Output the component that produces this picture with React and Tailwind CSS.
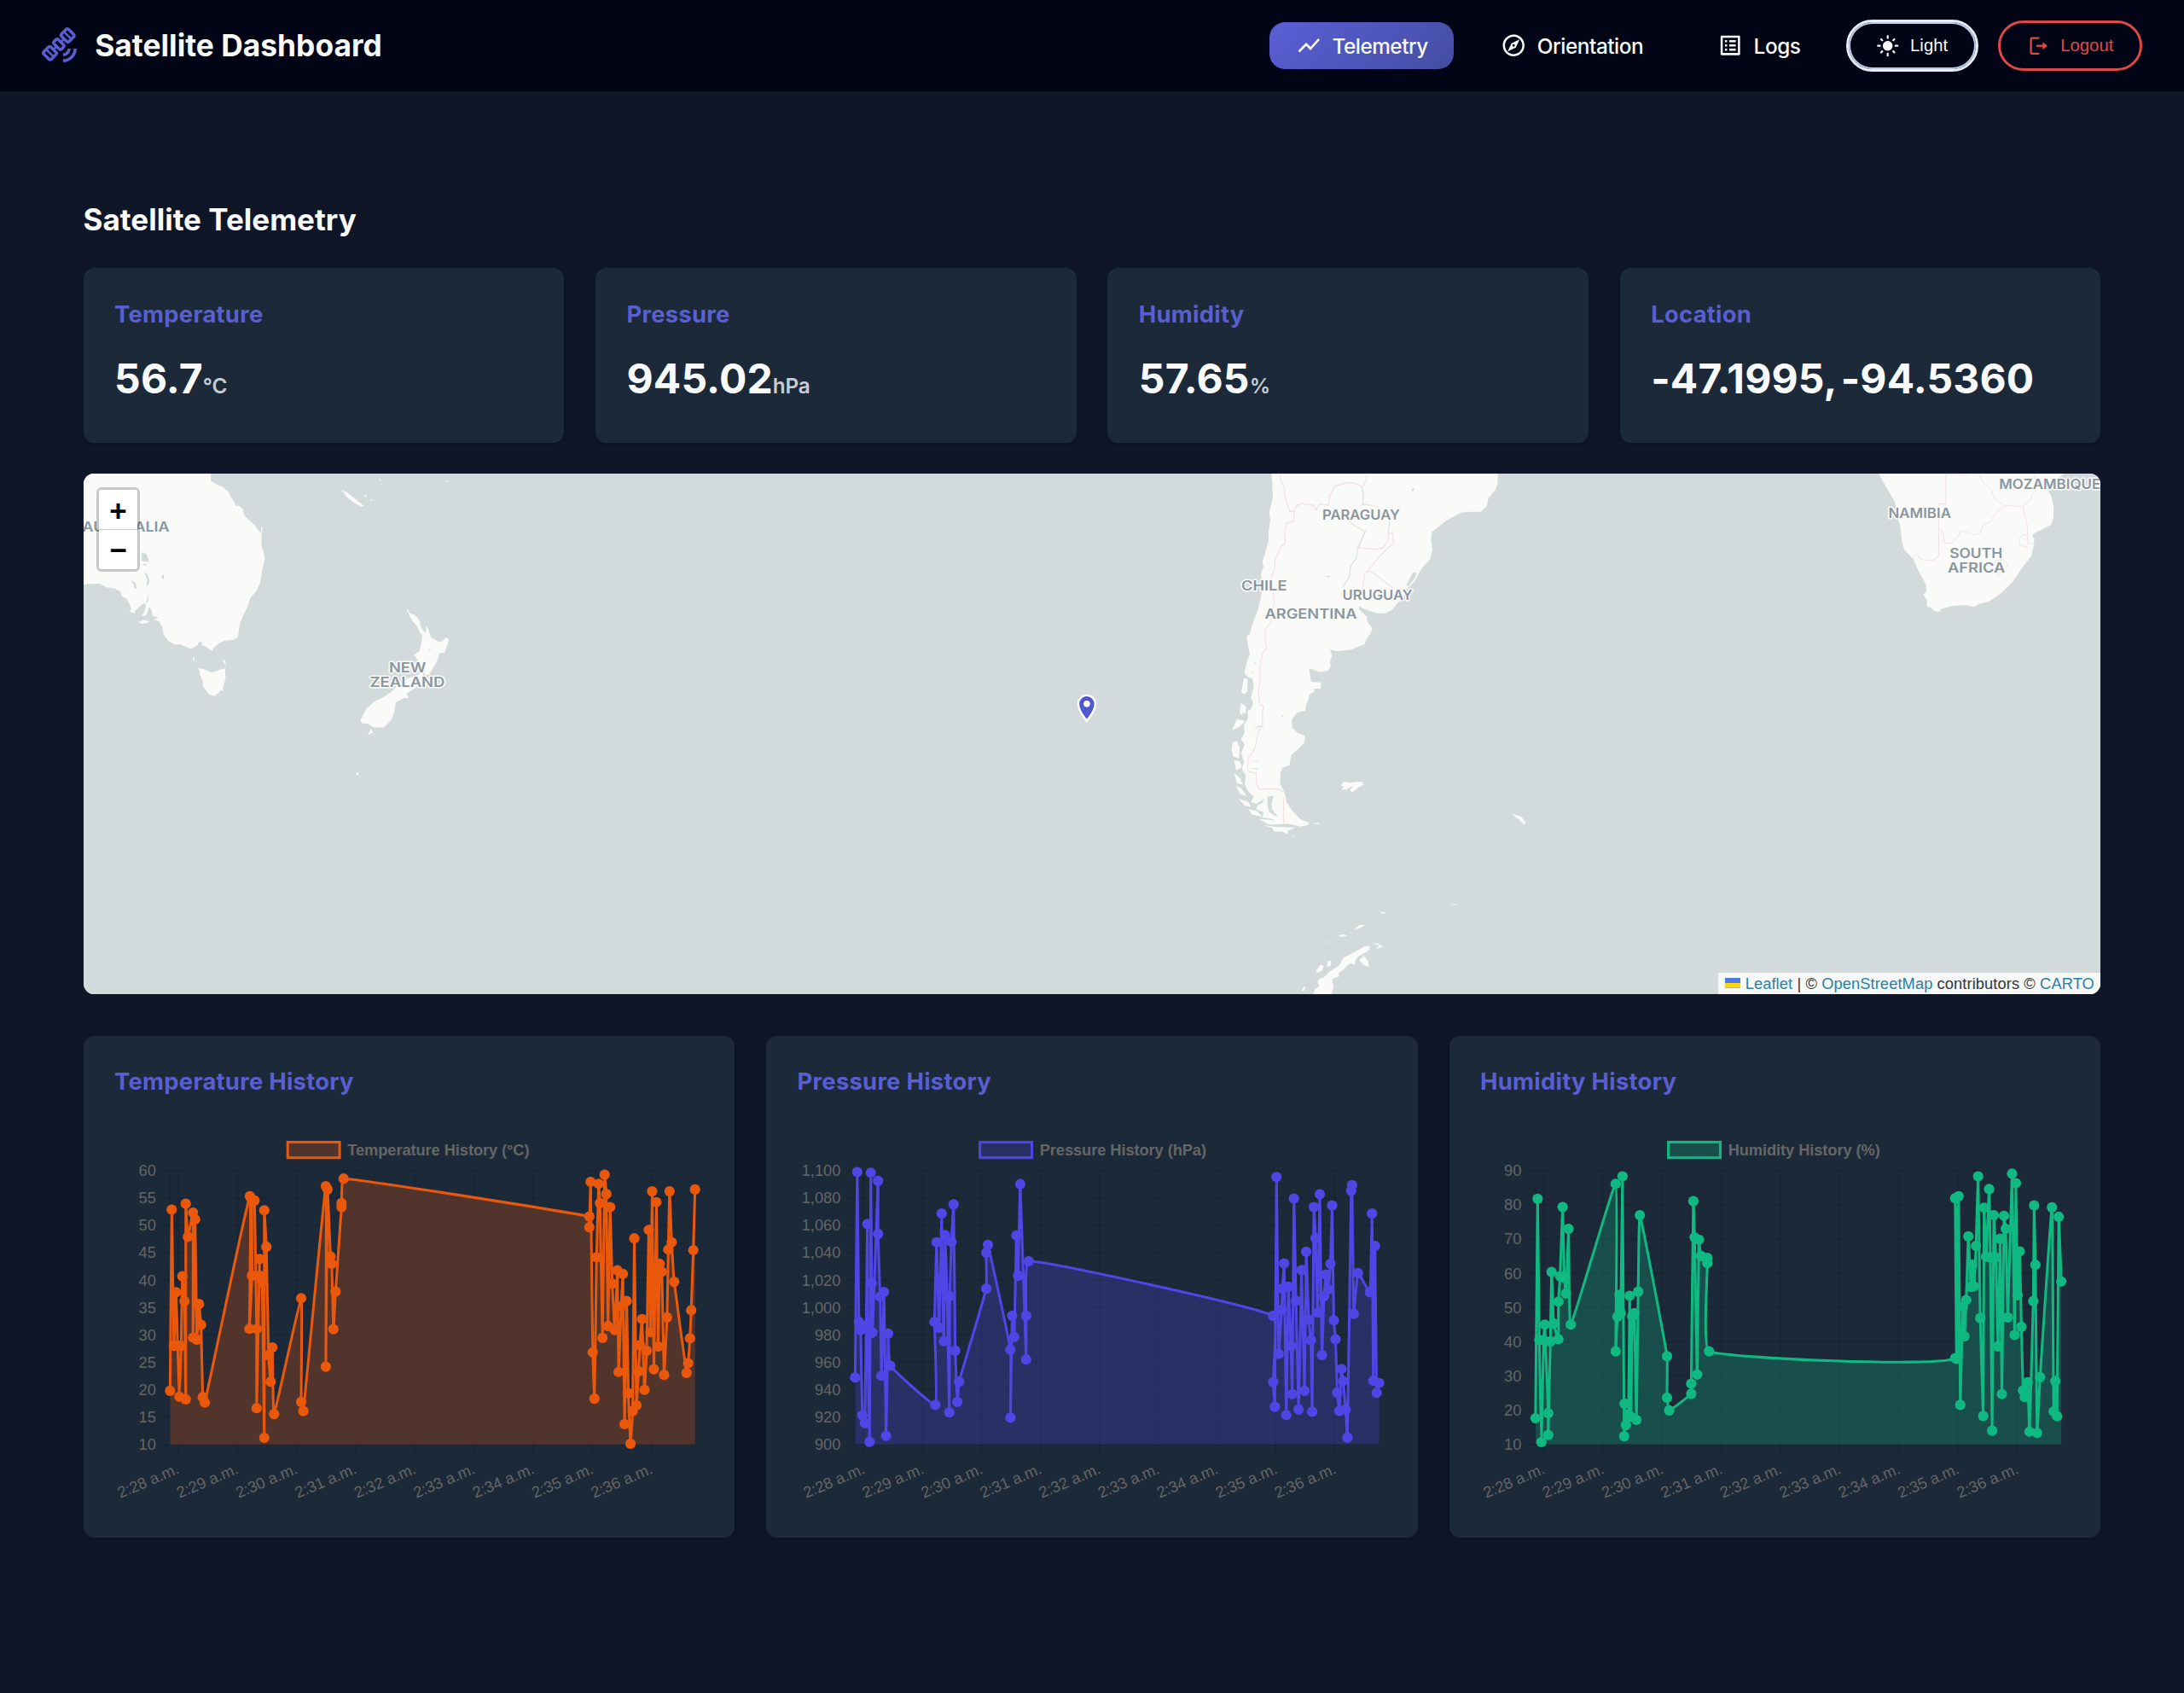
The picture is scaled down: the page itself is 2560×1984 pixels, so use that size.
import React from 'react';
import {
  MdOutlineSatelliteAlt,
  MdShowChart,
  MdOutlineExplore,
  MdListAlt,
  MdLightMode,
} from 'react-icons/md';

function LogoutIcon() {
  return (
    <svg viewBox="0 0 24 24" className="size-[18px]" fill="none" stroke="currentColor" strokeWidth="2">
      <path d="M12.5 4H5a1 1 0 0 0-1 1v14a1 1 0 0 0 1 1h7.5" />
      <path d="M9.5 12H18" />
      <path d="M16 8l5 4-5 4z" fill="currentColor" stroke="none" />
    </svg>
  );
}

function Header() {
  return (
    <header className="flex h-[70px] items-center justify-between bg-[#010415] px-8">
      <div className="flex items-center gap-[13px]">
        <MdOutlineSatelliteAlt className="size-7 text-[#595fd0]" />
        <h1 className="pt-px text-[23.2px] leading-8 font-bold text-[#f8fafc]">Satellite Dashboard</h1>
      </div>
      <nav className="flex items-center gap-4 text-[16px] leading-5 font-medium tracking-[-0.02em] text-[#f8fafc]">
        <a className="flex h-9 items-center gap-2 rounded-xl bg-linear-135 from-[#5a5fd6] to-[#444da3] px-5">
          <MdShowChart className="size-5" />
          <span className="pt-px">Telemetry</span>
        </a>
        <a className="flex h-9 items-center gap-2 rounded-xl pr-[21px] pl-5">
          <MdOutlineExplore className="size-5" />
          <span className="pt-px">Orientation</span>
        </a>
        <a className="flex h-9 items-center gap-2 rounded-xl pr-[19px] pl-5">
          <MdListAlt className="size-5" />
          <span className="pt-px">Logs</span>
        </a>
        <button className="flex h-[40px] items-center gap-2 rounded-full border-2 border-[#e6edf6] px-[21.5px] font-['Liberation_Sans',Arial,sans-serif] text-[13.333px] font-normal tracking-normal inset-shadow-[0_0_0_1.3px_#bccde5]">
          <MdLightMode className="size-[18px]" />
          Light
        </button>
        <button className="-ml-px flex h-[38.5px] items-center gap-2 rounded-full border-2 border-[#e04848] px-[20.3px] font-['Liberation_Sans',Arial,sans-serif] text-[13.333px] font-normal tracking-normal text-[#e04848]">
          <LogoutIcon />
          Logout
        </button>
      </nav>
    </header>
  );
}

function StatCard({ title, value, unit }) {
  return (
    <div className="h-[134.5px] rounded-lg bg-[#1c2939] p-6 shadow-sm">
      <h3 className="pt-px text-[18px] leading-[22px] font-bold tracking-[0.16px] text-[#595fd0]">{title}</h3>
      <div className="mt-[14px] flex items-baseline text-[31.5px] leading-[48px] font-bold tracking-[0.1px] whitespace-pre text-[#f8fafc] [word-spacing:-4px]">
        {value}
        {unit && <span className="text-[16px] font-semibold tracking-[-0.01em] text-[#c6cdd6]">{unit}</span>}
      </div>
    </div>
  );
}

const COUNTRY_LABELS = [
  ['AUSTRALIA', 96, 623.3, 102],
  ['NEW', 455.5, 788, 43.5],
  ['ZEALAND', 433, 805.6, 88],
  ['PARAGUAY', 1549.5, 609.2, 91],
  ['CHILE', 1454.5, 692.4, 53.5],
  ['URUGUAY', 1573, 703.5, 82],
  ['ARGENTINA', 1482, 725.5, 108],
  ['NAMIBIA', 2213, 607.3, 73.5],
  ['MOZAMBIQUE', 2342.7, 573, 119],
  ['SOUTH', 2284.7, 654, 62],
  ['AFRICA', 2282.5, 671.3, 67.5],
];

function WorldMap() {
  return (
    <svg viewBox="97.5 555.4 2365 609.6" preserveAspectRatio="none" className="block h-full w-full">
      <rect x="97" y="555" width="2366" height="611" fill="#d3dadb" />
      {/* Australia, Tasmania, New Caledonia, New Zealand */}
      <g transform="translate(89.3 550.4) scale(.33333)" fill="#fafbf9">
        <path d="M0,0 L470,0 472,40 490,52 515,62 535,80 540,95 552,110 560,130 570,127 585,140 588,160 605,178 625,195 640,215 648,225 650,200 654,205 650,230 650,270 656,285 662,312 655,345 650,370 645,400 632,428 612,450 600,485 588,510 575,540 570,570 567,590 550,600 520,602 500,612 484,626 476,640 465,631 452,622 440,618 442,606 428,608 426,618 402,632 380,622 365,616 345,616 325,605 305,580 303,558 290,535 270,527 290,521 268,516 262,492 254,484 248,508 240,516 228,515 238,500 244,482 240,468 222,482 205,498 204,506 185,500 192,492 188,478 176,455 158,445 155,430 130,418 105,415 80,402 50,403 0,407Z" />
        <path d="M244,465 L255,436 250,470Z M190,388 L208,400 211,420 203,418 200,404Z M238,360 L250,372 257,392 250,409 246,406 248,388Z M297,380 L308,366 306,388Z M228,292 L245,297 256,325 230,323Z M232,333 L248,332 240,339Z" fill="#d3dadb" />
        <path d="M218,536 L235,529 258,536 245,541 228,543Z" />
        <path d="M430,698 L450,704 475,714 500,706 522,700 524,738 515,765 514,780 506,776 500,786 492,792 488,797 468,793 458,782 446,765 442,740 434,722Z M408,665 L412,659 415,666 412,677Z M513,665 L522,672 524,684 517,678Z M518,684 L527,686 524,691Z" />
        <path d="M933,72 L955,84 990,112 1010,128 1000,131 975,117 948,95Z M1010,88 L1021,94 1017,99Z M1032,106 L1040,108 1035,112Z M1062,30 L1070,37 1066,40Z M1069,48 L1074,55 1070,55Z M1296,42 L1309,38 1300,44Z" />
        <path d="M1160,490 L1166,492 1170,505 1190,512 1205,530 1210,552 1220,568 1228,575 1229,548 1238,565 1246,590 1270,605 1285,605 1298,592 1309,597 1303,620 1295,644 1275,646 1270,670 1255,695 1240,722 1225,724 1222,700 1200,672 1187,652 1205,640 1213,610 1215,582 1206,572 1198,552 1182,535 1172,518Z" />
        <path d="M1212,715 L1224,730 1205,755 1190,770 1160,788 1168,805 1150,804 1136,812 1122,820 1118,850 1108,880 1095,893 1080,908 1045,908 1025,895 1003,893 998,882 1010,860 1018,843 1045,818 1080,800 1110,780 1130,755 1165,735 1195,725Z M1025,935 L1034,912 1043,925Z M982,1075 L988,1063 992,1076Z" />
        <path d="M1239,629 l6,0 -2,8Z" fill="#d3dadb" />
      </g>
      {/* South America and the Antarctic Peninsula */}
      <g transform="translate(1399.2 550.4) scale(.33333 .40816)" fill="#fafbf9">
        <path d="M270,0 L275,40 277,80 270,105 264,125 268,145 262,180 262,205 250,240 240,265 244,280 235,300 240,330 235,370 222,410 205,445 195,475 185,478 190,510 196,530 185,555 176,585 190,597 205,600 210,625 200,655 208,672 198,690 188,694 190,715 175,735 178,755 165,775 178,790 166,815 175,840 168,860 182,880 178,905 190,925 210,940 200,955 225,962 218,975 245,985 240,1000 275,1004 300,1015 345,1020 372,1026 400,1022 404,1014 375,1006 345,980 325,955 318,930 302,900 304,870 312,855 335,850 342,820 370,800 388,785 390,765 365,757 345,742 343,720 360,700 392,692 394,675 403,660 404,648 425,636 418,630 445,630 446,612 412,610 407,590 405,572 430,578 445,582 470,578 480,568 478,550 485,536 478,517 500,522 550,518 600,502 608,485 622,470 626,455 610,440 607,422 580,403 580,392 600,402 640,412 670,414 695,405 715,385 735,370 745,345 775,322 800,285 830,258 838,230 833,205 836,180 860,165 890,145 940,124 975,122 1008,122 1030,105 1035,82 1060,58 1068,38 1068,0Z" />
        <path d="M175,600 L188,602 187,638 178,645 166,642 170,622Z M165,672 L182,680 182,700 168,700 172,710 160,698Z M150,718 L180,722 162,738 133,750Z M135,785 L150,780 160,800 158,830 138,825 132,805Z M140,836 L160,838 168,855 148,865Z M142,872 L160,885 172,905 150,902Z M146,908 L165,915 185,938 162,932Z M158,946 L190,955 200,970 178,966Z M190,976 L222,982 240,998 205,992Z M228,1004 L280,1008 325,1018 262,1020Z M242,1022 L285,1027 355,1029 330,1038 328,1048 310,1040 282,1040 275,1030Z M345,1050 l6,2 -6,3Z M415,1018 L435,1014 442,1018Z" />
        <path d="M516,908 L528,896 545,900 590,896 596,906 580,912 556,928 548,922 560,908 535,920 518,920 528,912Z M1117,990 L1150,997 1167,1015 1160,1020 1145,1007Z M902,1247 L918,1247 926,1252Z M657,1270 L678,1273 660,1276Z M562,1322 L582,1308 600,1309 590,1315Z M508,1338 L524,1335 540,1340 514,1343Z M470,1358 l8,-4 -4,6Z M548,1331 l6,-3 -2,4Z" />
        <path d="M418,1510 L425,1492 440,1485 434,1470 440,1463 455,1460 480,1440 510,1425 525,1402 560,1388 600,1370 618,1370 614,1382 575,1400 566,1412 566,1422 548,1418 525,1437 508,1446 510,1456 485,1464 490,1485 482,1510Z M628,1360 L645,1362 666,1370 640,1378 650,1368Z M580,1410 L596,1396 612,1412 615,1430 600,1425Z M428,1440 L445,1422 456,1426 450,1440 434,1446Z M470,1412 L482,1410 480,1425 468,1430Z M378,1498 L386,1484 392,1488 386,1498Z" />
        <path d="M745,335 L768,298 784,295 776,312 755,334Z M462,306 l18,0 -8,5Z M305,704 l10,4 -2,5Z M762,60 l14,-8 -6,12Z M212,555 l8,0 -4,5Z M202,580 l8,0 -4,6Z M205,745 L232,735 248,740 228,740Z M200,835 l25,5 -2,2Z M195,858 l32,0 -5,3Z M258,940 L280,938 272,960 275,975 295,1000 265,985 258,965Z M210,965 L250,945 235,962Z" fill="#d3dadb" />
        <g fill="none" stroke="#f0e2e3" strokeWidth="3.5">
          <path d="M302,15 L305,35 318,52 318,70 335,120 352,120 350,148 325,155 318,180 320,212 305,222 285,260 282,290 272,310 282,380 270,440 250,460 250,490 256,512 240,530 232,570 232,610 226,640 232,675 245,680 240,700 240,735 225,755 215,800 190,830 188,855 195,870 218,872 218,900 228,918 298,918 312,926" />
          <path d="M352,120 L360,105 378,97 398,102 420,103 428,117 440,100 472,103 478,75 495,48 540,38 565,40 590,50 605,35 606,15 M590,50 L595,70 592,100 630,104 650,110 M545,150 L570,165 602,178 575,225 640,230 665,225 682,205 684,182 M684,182 L698,185 702,212 670,235 640,262 605,297 M605,297 L618,292 650,310 700,342 M600,297 L592,345 M314,940 L314,1020" />
        </g>
        <path d="M590,50 L596,78 592,104 M602,178 L575,230 570,255 550,280 546,310 522,338 M688,150 L682,182" fill="none" stroke="#dcdfe0" strokeWidth="3.5" />
      </g>
      {/* Southern Africa */}
      <g transform="translate(2138.8 550.4) scale(.33333)" fill="#fafbf9">
        <path d="M185,0 L192,20 205,45 228,85 245,115 252,145 258,180 265,205 270,255 280,285 310,315 330,360 355,405 356,430 345,440 358,458 358,484 370,485 385,498 400,502 410,490 450,480 490,477 525,483 540,474 575,465 600,450 625,430 660,395 690,350 725,305 735,265 735,242 728,235 735,225 760,212 795,195 803,170 804,130 796,95 782,70 810,40 838,16 838,0Z" />
        <path d="M425,16 L425,122 400,122 400,305 380,320 345,318 330,312 325,298 318,300 310,312 M400,205 L415,225 420,260 445,260 465,240 475,218 490,218 520,230 545,225 555,198 580,185 600,155 635,130 600,108 585,75 560,50 540,16 M425,18 L480,18 495,22 510,16 M635,126 L695,132 725,105 728,85 740,75 M695,132 L710,190 714,260 732,262 M714,235 L695,230 682,245 685,265 705,275 714,262 M738,16 L738,35 M600,320 L625,318 642,335 630,355 610,374 596,365 M592,335 L600,320" fill="none" stroke="#f0e2e3" strokeWidth="3" />
      </g>
      <g
        fill="#8996a0"
        stroke="#fafbf9"
        strokeWidth="3"
        strokeLinejoin="round"
        paintOrder="stroke"
        fontFamily="Inter, sans-serif"
        fontSize="15.6"
        fontWeight="600"
      >
        {COUNTRY_LABELS.map(([name, x, y, width]) => (
          <text key={name} x={x} y={y} textLength={width} lengthAdjust="spacingAndGlyphs">
            {name}
          </text>
        ))}
      </g>
      {/* Satellite position marker */}
      <g transform="translate(1273.4 829.8)">
        <path
          d="M0,15.5 C-3,10.5 -10,4.5 -10,-4.5 A10,10 0 0 1 10,-4.5 C10,4.5 3,10.5 0,15.5Z"
          fill="#5157cc"
          stroke="#ffffff"
          strokeWidth="2.4"
        />
        <circle cy="-4.5" r="3.8" fill="#ffffff" />
      </g>
    </svg>
  );
}

function MapPanel() {
  return (
    <section className="relative mt-6 h-[400px] overflow-hidden rounded-lg bg-[#d3dadb]">
      <WorldMap />
      <div className="absolute top-[10px] left-[10px] flex flex-col rounded border-2 border-black/20 bg-clip-padding font-['Liberation_Mono',monospace] text-[23px] font-bold text-black">
        <button className="h-[31px] w-[30px] rounded-t-[2px] border-b border-[#cccccc] bg-white pt-[3px] text-center leading-[27px]"><span className="relative top-[2px]">+</span></button>
        <button className="h-[30px] w-[30px] rounded-b-[2px] bg-white pt-[3px] text-center leading-[27px]"><span className="relative top-[2px]">−</span></button>
      </div>
      <div className="absolute right-0 bottom-0 flex h-[16.5px] items-center bg-white/80 px-[5px] font-['Liberation_Sans',Arial,sans-serif] text-[12px] leading-[16.5px] tracking-[0.065px] whitespace-pre text-[#333333]">
        <svg viewBox="0 0 12 8" className="mr-[3.5px] h-2 w-3">
          <path d="M0 0h12v4H0z" fill="#4C7BE1" />
          <path d="M0 4h12v3H0z" fill="#FFD500" />
          <path d="M0 7h12v1H0z" fill="#E0BC00" />
        </svg>
        <span className="text-[#2a80a6]">Leaflet</span>
        <span> | © </span>
        <span className="text-[#2a80a6]">OpenStreetMap</span>
        <span> contributors © </span>
        <span className="text-[#2a80a6]">CARTO</span>
      </div>
    </section>
  );
}

/* Samples are kept on a 1568-unit grid; these factors bring them to card pixels. */
const UNIT_X = 0.32645;
const UNIT_Y = 0.25112;
const PLOT_TOP = 424;
const PLOT_BOTTOM = 1262;

const TEMPERATURE = [
  [220,1098],[224,543],[229,960],[234,796],[238,960],[242,1116],[246,960],[249,747],[254,823],[257,1124],[257,525],[262,626],
  [274,552],[274,935],[279,573],[283,941],[288,832],[293,896],[297,1117],[302,1134],[408,502],[407,908],[413,745],[413,512],
  [419,515],[424,908],[424,1151],[431,694],[431,745],[437,765],[442,1242],[442,545],[447,657],[452,989],[457,1070],[461,965],
  [465,1169],[529,814],[529,1132],[534,1160],[587,471],[587,1024],[591,481],[598,686],[601,709],[605,909],[610,794],[624,535],
  [624,523],[629,448],[1208,564],[1208,597],[1211,458],[1216,980],[1220,1122],[1225,689],[1230,464],[1233,523],[1239,936],
  [1244,436],[1248,495],[1252,900],[1257,535],[1262,770],[1268,912],[1274,729],[1277,1040],[1283,840],[1287,740],[1291,1200],
  [1296,823],[1300,1105],[1305,1260],[1310,1160],[1314,631],[1319,1142],[1324,1038],[1327,958],[1332,878],[1338,1095],
  [1343,975],[1348,605],[1352,918],[1356,487],[1360,1032],[1366,520],[1370,962],[1374,709],[1379,733],[1384,1049],[1391,873],
  [1394,665],[1397,487],[1402,643],[1408,764],[1437,1043],[1441,1013],[1445,937],[1448,851],[1453,667],[1457,481],
];

const PRESSURE = [
  [225,1057],[230,428],[234,887],[238,912],[242,1173],[248,1197],[254,587],[254,895],[259,1254],[262,430],[264,767],[266,920],
  [279,455],[279,617],[284,810],[287,1052],[293,795],[298,1236],[303,923],[308,1021],[414,1141],[412,887],[417,643],[423,905],
  [429,555],[431,755],[434,946],[437,621],[442,808],[447,1164],[448,808],[452,642],[457,527],[461,975],[466,1132],[470,1070],
  [534,785],[534,675],[538,651],[591,972],[591,1180],[595,868],[600,933],[605,622],[609,745],[614,465],[628,1002],[628,868],
  [634,701],[1210,868],[1210,1071],[1214,1147],[1218,443],[1223,985],[1230,850],[1232,785],[1236,708],[1241,1172],[1246,779],
  [1252,960],[1255,1108],[1259,509],[1264,822],[1270,1155],[1277,728],[1284,1098],[1288,672],[1294,880],[1299,943],[1302,1162],
  [1306,535],[1310,630],[1315,858],[1320,496],[1325,988],[1330,808],[1334,742],[1340,787],[1345,709],[1349,530],[1353,882],
  [1357,940],[1361,1103],[1366,1160],[1371,1031],[1375,1068],[1381,1155],[1385,1241],[1394,485],[1396,468],[1400,862],
  [1410,737],[1438,796],[1443,555],[1446,1067],[1450,654],[1454,1104],[1460,1074],
];

const HUMIDITY = [
  [221,1182],[226,510],[230,942],[235,1255],[240,942],[243,895],[251,1166],[251,1233],[256,947],[259,734],[264,892],[275,940],
  [275,825],[279,747],[285,535],[289,752],[293,800],[299,602],[304,895],[410,464],[410,977],[414,871],[419,804],[422,860],
  [426,441],[430,1237],[431,1137],[434,1203],[440,1170],[443,807],[446,1178],[449,870],[454,860],[459,1187],[463,794],[467,560],
  [531,992],[531,1119],[536,1158],[588,1107],[588,1076],[593,517],[596,628],[602,1048],[606,635],[611,685],[626,691],[626,707],
  [630,977],[1210,998],[1210,508],[1213,1000],[1218,502],[1222,1141],[1228,840],[1232,931],[1236,820],[1241,625],[1247,780],
  [1250,712],[1254,778],[1259,654],[1264,441],[1269,875],[1276,1175],[1278,537],[1283,687],[1290,480],[1293,690],[1297,1220],
  [1301,560],[1306,690],[1311,962],[1316,632],[1320,1108],[1325,562],[1329,602],[1334,873],[1344,433],[1350,927],[1353,462],
  [1357,805],[1362,671],[1366,902],[1370,1097],[1374,1117],[1381,1072],[1385,1223],[1394,823],[1396,530],[1399,712],[1403,1227],
  [1410,1056],[1438,536],[1442,1161],[1446,1068],[1450,1176],[1454,565],[1460,763],
];

const MINUTES = ['2:28 a.m.', '2:29 a.m.', '2:30 a.m.', '2:31 a.m.', '2:32 a.m.', '2:33 a.m.', '2:34 a.m.', '2:35 a.m.', '2:36 a.m.'];

/* Cardinal spline with a tension of 0.1, clamped to the plot area. */
function splinePath(points, top, bottom) {
  const clamp = (v) => Math.max(top, Math.min(bottom, v));
  const controls = points.map((cur, i) => {
    const prev = points[i - 1] || cur;
    const next = points[i + 1] || cur;
    const d01 = Math.hypot(cur[0] - prev[0], cur[1] - prev[1]);
    const d12 = Math.hypot(next[0] - cur[0], next[1] - cur[1]);
    const total = d01 + d12 || 1;
    const a = (0.1 * d01) / total;
    const b = (0.1 * d12) / total;
    const dx = next[0] - prev[0];
    const dy = next[1] - prev[1];
    return [cur[0] - a * dx, clamp(cur[1] - a * dy), cur[0] + b * dx, clamp(cur[1] + b * dy)];
  });
  return points
    .map((p, i) => {
      if (i === 0) return `M${p[0]},${p[1]}`;
      const c = controls[i - 1];
      const d = controls[i];
      return `C${c[2]},${c[3]} ${d[0]},${d[1]} ${p[0]},${p[1]}`;
    })
    .join(' ');
}

function HistoryChart({ title, legend, color, data, ticks, shift, firstTick, tickStep, labelX, axisX, legendX }) {
  const sx = (x) => x * UNIT_X - 24 - shift;
  const sy = (y) => y * UNIT_Y - 2.44 - 64;
  const points = data.map(([x, y]) => [sx(x), sy(y)]);
  const top = sy(PLOT_TOP);
  const bottom = sy(PLOT_BOTTOM);
  const right = points[points.length - 1][0];
  const line = splinePath(points, top, bottom);
  const tickXs = MINUTES.map((_, i) => sx(firstTick + i * tickStep));
  return (
    <div className="h-[386px] rounded-lg bg-[#1c2939] p-6 shadow-sm">
      <h3 className="h-10 text-[18px] leading-[23.5px] font-bold tracking-[0.16px] text-[#595fd0]">{title}</h3>
      <svg
        viewBox="0 0 453.33 298"
        className="block h-[298px] w-[453.33px] overflow-visible"
        fontFamily="'Liberation Sans', Arial, sans-serif"
        fontSize="12"
      >
        <g stroke="#000000" strokeOpacity="0.1" strokeWidth="1">
          {ticks.map((t, i) => {
            const y = top + ((bottom - top) * i) / (ticks.length - 1);
            return <path key={t} d={`M${sx(axisX - 17)},${y}H${right}`} />;
          })}
          {tickXs.map((x, i) => (
            <path key={i} d={`M${x},${top}V${bottom + 8}`} />
          ))}
          <path d={`M${sx(axisX)},${top}V${bottom}`} />
        </g>
        <path d={`${line} L${right},${bottom} L${points[0][0]},${bottom}Z`} fill={color} fillOpacity="0.26" />
        <path d={line} fill="none" stroke={color} strokeWidth="2" strokeLinejoin="round" />
        {points.map(([x, y], i) => (
          <circle key={i} cx={x} cy={y} r="4" fill={color} />
        ))}
        <rect x={sx(legendX) + 1} y="18" width="40" height="12" fill={color} fillOpacity="0.26" stroke={color} strokeWidth="2" />
        <text x={sx(legendX) + 47} y="28.3" fontWeight="700" fill="#666666" letterSpacing="-0.05">
          {legend}
        </text>
        <g fill="#666666">
          {ticks.map((t, i) => (
            <text key={t} x={sx(labelX)} y={top + ((bottom - top) * i) / (ticks.length - 1) + 4.1} textAnchor="end">
              {t}
            </text>
          ))}
          {MINUTES.map((m, i) => (
            <text key={m} transform={`translate(${tickXs[i] + 1.8} 272.4) rotate(-23)`} textAnchor="end">
              {m}
            </text>
          ))}
        </g>
      </svg>
    </div>
  );
}

export default function App() {
  return (
    <div className="h-[1302px] w-[1680px] overflow-hidden bg-[#0f1628] font-[Inter,sans-serif] [zoom:1.52381]">
      <Header />
      <main className="px-16 pt-[83px]">
        <h2 className="mb-[21px] text-[23px] leading-8 font-bold text-[#f8fafc]">Satellite Telemetry</h2>
        <section className="grid grid-cols-4 gap-6">
          <StatCard title="Temperature" value="56.7" unit="°C" />
          <StatCard title="Pressure" value="945.02" unit="hPa" />
          <StatCard title="Humidity" value="57.65" unit="%" />
          <StatCard title="Location" value="-47.1995, -94.5360" />
        </section>
        <MapPanel />
        <section className="mt-8 grid grid-cols-3 gap-6">
          <HistoryChart
            title="Temperature History"
            legend="Temperature History (°C)"
            color="#ea580c"
            data={TEMPERATURE}
            ticks={['60', '55', '50', '45', '40', '35', '30', '25', '20', '15', '10']}
            shift={4.94}
            firstTick={238}
            tickStep={139.5}
            axisX={220}
            labelX={187}
            legendX={494}
          />
          <HistoryChart
            title="Pressure History"
            legend="Pressure History (hPa)"
            color="#4f46e5"
            data={PRESSURE}
            ticks={['1,100', '1,080', '1,060', '1,040', '1,020', '1,000', '980', '960', '940', '920', '900']}
            shift={5.27}
            firstTick={245}
            tickStep={138.8}
            axisX={225}
            labelX={191}
            legendX={516}
          />
          <HistoryChart
            title="Humidity History"
            legend="Humidity History (%)"
            color="#10b981"
            data={HUMIDITY}
            ticks={['90', '80', '70', '60', '50', '40', '30', '20', '10']}
            shift={5.6}
            firstTick={240}
            tickStep={139.5}
            axisX={221}
            labelX={188}
            legendX={531}
          />
        </section>
      </main>
    </div>
  );
}
